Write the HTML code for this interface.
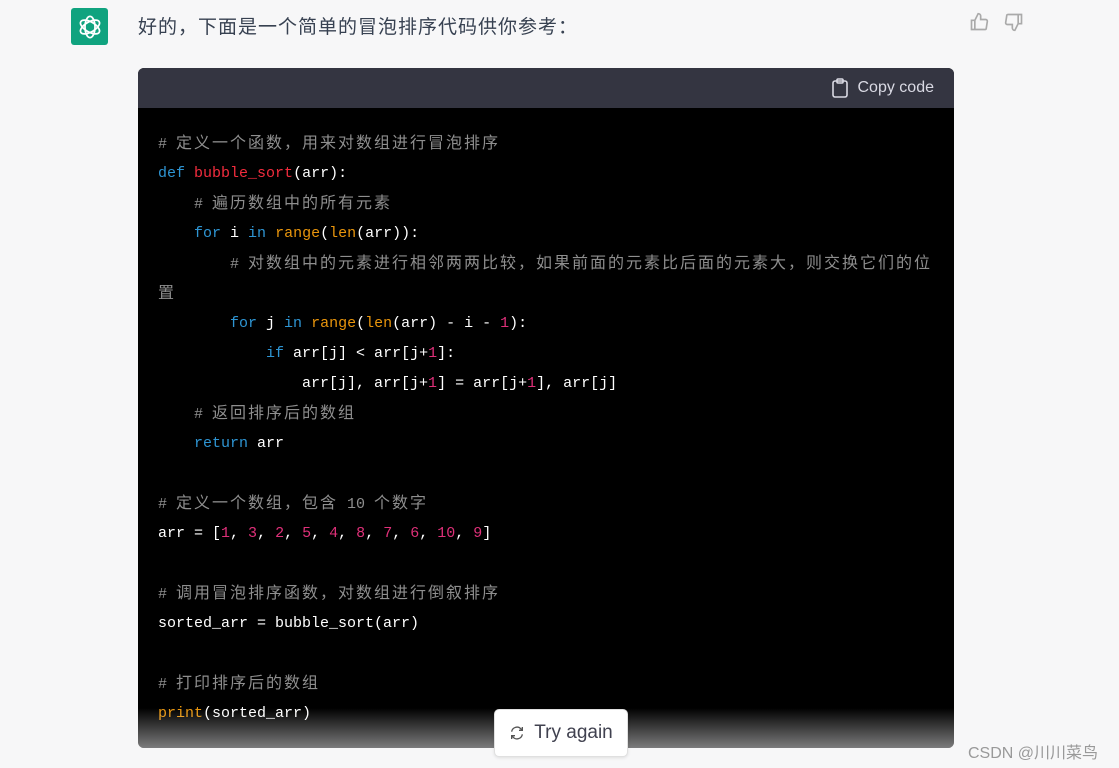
<!DOCTYPE html>
<html><head><meta charset="utf-8"><style>
body{margin:0;width:1119px;height:768px;background:#f7f7f8;position:relative;overflow:hidden;font-family:"Liberation Sans","Noto Sans CJK SC",sans-serif}
.logo{position:absolute;left:71px;top:8px;width:37px;height:37px;background:#10a37f;border-radius:3px;display:flex;align-items:center;justify-content:center}
.msg{position:absolute;left:138px;top:12px;font-size:19px;color:#374151;letter-spacing:1px}
.thumbs{position:absolute;top:12px}
.block{position:absolute;left:138px;top:68px;width:816px;height:680px;background:#000;border-radius:6px;overflow:hidden}
.hdr{height:40px;background:#343541;position:relative}
.copy{position:absolute;right:20px;top:10px;color:#d9d9e3;font-size:16px;display:flex;align-items:center;gap:9px}
.code{padding:21px 20px;font-family:"Liberation Mono","Noto Sans CJK SC",monospace;font-size:15px;color:#fff}
.code div{height:30px;line-height:30px;white-space:pre;overflow:hidden}
.c{color:#8e8e8e}
.z{font-size:16px;letter-spacing:2px}
.k{color:#2e95d3}.f{color:#f22c3d}.b{color:#e9950c}.n{color:#df3079}
.fade{position:absolute;left:0;right:0;bottom:0;height:40px;background:linear-gradient(rgba(247,247,248,0),rgba(247,247,248,0.5))}
.try{position:absolute;left:494px;top:709px;width:132px;height:46px;background:#fff;border:1px solid #e0e0e0;border-radius:5px;box-shadow:0 1px 3px rgba(0,0,0,.1);display:flex;align-items:center;justify-content:center;gap:9px;font-size:19px;color:#40414f}
.wm{position:absolute;left:968px;top:739px;font-size:16px;color:#999}
</style></head><body>
<div class="logo"><svg width="30" height="30" viewBox="0 0 24 24" fill="none" stroke="#fff" stroke-width="1.4"><g transform="translate(12 12)"><ellipse rx="4" ry="8.5"/><ellipse rx="4" ry="8.5" transform="rotate(60)"/><ellipse rx="4" ry="8.5" transform="rotate(120)"/></g></svg></div>
<div class="msg">好的，下面是一个简单的冒泡排序代码供你参考：</div>
<svg class="thumbs" style="left:969px" width="20" height="20" viewBox="0 0 24 24" fill="none" stroke="#aaa" stroke-width="2"><path d="M7 10v11H3V10h4zm0 0l4-8a3 3 0 013 3v4h6a2 2 0 012 2.3l-1.4 9A2 2 0 0118.6 21H7"/></svg>
<svg class="thumbs" style="left:1004px" width="20" height="20" viewBox="0 0 24 24" fill="none" stroke="#aaa" stroke-width="2"><path d="M17 14V3h4v11h-4zm0 0l-4 8a3 3 0 01-3-3v-4H4a2 2 0 01-2-2.3l1.4-9A2 2 0 015.4 3H17"/></svg>
<div class="block">
<div class="hdr"><div class="copy"><svg width="18" height="20" viewBox="0 0 18 20" fill="none" stroke="#d9d9e3" stroke-width="1.6"><rect x="2" y="3" width="14" height="16" rx="2"/><rect x="6" y="1" width="6" height="4" rx="1"/></svg>Copy code</div></div>
<div class="code">
<div><span class="c"># <span class="z">定义一个函数，用来对数组进行冒泡排序</span></span></div>
<div><span class="k">def</span> <span class="f">bubble_sort</span>(arr):</div>
<div>    <span class="c"># <span class="z">遍历数组中的所有元素</span></span></div>
<div>    <span class="k">for</span> i <span class="k">in</span> <span class="b">range</span>(<span class="b">len</span>(arr)):</div>
<div>        <span class="c"># <span class="z">对数组中的元素进行相邻两两比较，如果前面的元素比后面的元素大，则交换它们的位</span></span></div>
<div><span class="c z">置</span></div>
<div>        <span class="k">for</span> j <span class="k">in</span> <span class="b">range</span>(<span class="b">len</span>(arr) - i - <span class="n">1</span>):</div>
<div>            <span class="k">if</span> arr[j] &lt; arr[j+<span class="n">1</span>]:</div>
<div>                arr[j], arr[j+<span class="n">1</span>] = arr[j+<span class="n">1</span>], arr[j]</div>
<div>    <span class="c"># <span class="z">返回排序后的数组</span></span></div>
<div>    <span class="k">return</span> arr</div>
<div></div>
<div><span class="c"># <span class="z">定义一个数组，包含</span> 10 <span class="z">个数字</span></span></div>
<div>arr = [<span class="n">1</span>, <span class="n">3</span>, <span class="n">2</span>, <span class="n">5</span>, <span class="n">4</span>, <span class="n">8</span>, <span class="n">7</span>, <span class="n">6</span>, <span class="n">10</span>, <span class="n">9</span>]</div>
<div></div>
<div><span class="c"># <span class="z">调用冒泡排序函数，对数组进行倒叙排序</span></span></div>
<div>sorted_arr = bubble_sort(arr)</div>
<div></div>
<div><span class="c"># <span class="z">打印排序后的数组</span></span></div>
<div><span class="b">print</span>(sorted_arr)</div>
</div>
<div class="fade"></div>
</div>
<div class="try"><svg width="16" height="16" viewBox="0 0 24 24" fill="none" stroke="#555" stroke-width="2"><path d="M4 10a8 8 0 0114-4l2 2M20 14a8 8 0 01-14 4l-2-2M20 3v5h-5M4 21v-5h5"/></svg>Try again</div>
<div class="wm">CSDN @川川菜鸟</div>
</body></html>
